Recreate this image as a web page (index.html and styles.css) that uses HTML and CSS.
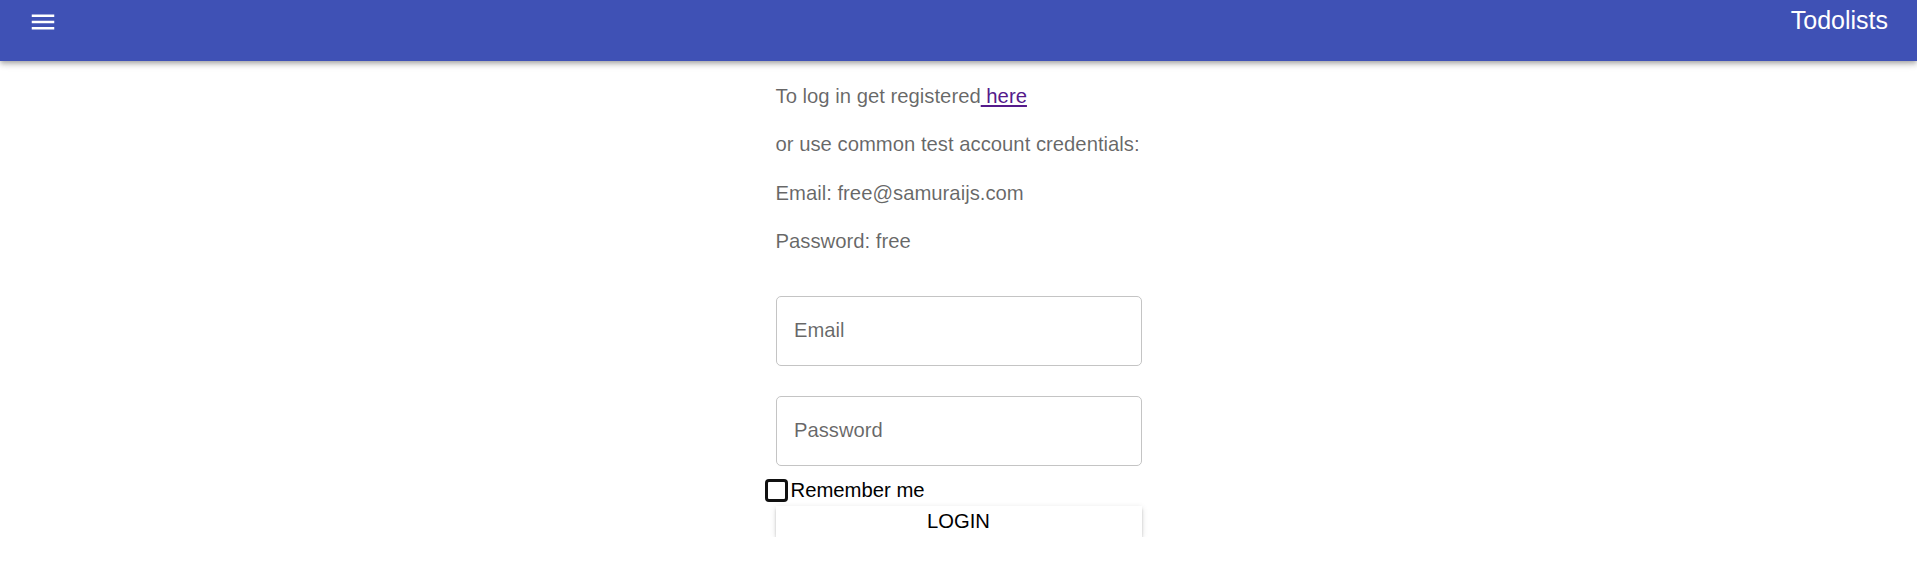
FILE: index.html
```html
<!DOCTYPE html>
<html lang="en">
<head>
<meta charset="utf-8">
<title>Todolists</title>
<link rel="stylesheet" href="styles.css">
</head>
<body>
<header class="app-bar">
  <button class="menu-btn" aria-label="menu">
    <svg class="menu-icon" viewBox="0 0 24 24" width="30" height="30" aria-hidden="true">
      <path fill="#fff" d="M3 18h18v-2H3v2zm0-5h18v-2H3v2zm0-7v2h18V6H3z"/>
    </svg>
  </button>
  <h1 class="app-title">Todolists</h1>
</header>
<main class="page">
  <form class="login">
    <div class="info">
      <p>To log in get registered<a class="reg-link" href="#"> here</a></p>
      <p>or use common test account credentials:</p>
      <p>Email: free@samuraijs.com</p>
      <p>Password: free</p>
    </div>
    <div class="field"><input class="text-input" type="email" placeholder="Email"></div>
    <div class="field"><input class="text-input" type="password" placeholder="Password"></div>
    <label class="remember"><input class="check" type="checkbox"><span>Remember me</span></label>
    <button class="login-btn" type="button">Login</button>
  </form>
</main>
</body>
</html>
```
FILE: styles.css
```css
* { box-sizing: border-box; }
html, body { margin: 0; padding: 0; background: #fff; }
body { font-family: "Liberation Sans", Arial, sans-serif; color: #000; }

.app-bar {
  display: flex;
  justify-content: space-between;
  align-items: flex-start;
  height: 61px;
  padding: 0 29px 0 28px;
  background: #3f51b5;
  color: #fff;
  box-shadow: 0 2px 4px -1px rgba(0,0,0,0.2), 0 4px 5px 0 rgba(0,0,0,0.14), 0 1px 10px 0 rgba(0,0,0,0.12);
  position: relative;
  z-index: 1;
}
.menu-btn {
  margin-top: 6.5px;
  padding: 0;
  border: 0;
  background: none;
  width: 30px;
  height: 30px;
  cursor: pointer;
}
.menu-icon { display: block; }
.app-title {
  margin: 0;
  font-size: 25px;
  font-weight: 400;
  line-height: 40px;
}

.page {
  display: flex;
  justify-content: center;
  padding-top: 1px;
}
.login {
  width: 366px;
  display: flex;
  flex-direction: column;
}
.info p {
  margin: 20px 0;
  font-size: 20.3px;
  line-height: 28.4px;
  color: rgba(0,0,0,0.6);
}
.reg-link { color: #551a8b; text-decoration: underline; }

.field { margin: 20px 0 10px; }
.text-input {
  display: block;
  width: 100%;
  height: 70px;
  padding: 0 17.5px;
  border: 1px solid #c4c4c4;
  border-radius: 5px;
  font-family: inherit;
  font-size: 20.2px;
  color: #000;
  outline: none;
}
.text-input::placeholder { color: rgba(0,0,0,0.6); opacity: 1; }

.remember {
  display: flex;
  align-items: center;
  height: 30px;
  margin-left: -11px;
  font-size: 20.3px;
  line-height: 23px;
  color: #000;
}
.check {
  appearance: none;
  -webkit-appearance: none;
  width: 23px;
  height: 23px;
  margin: 0 3px 0 0;
  border: 3px solid #111;
  border-radius: 4px;
  background: #fff;
}

.login-btn {
  height: 31px;
  padding: 0;
  border: 0;
  border-radius: 0;
  background: #fff;
  font-family: inherit;
  font-size: 20.2px;
  text-transform: uppercase;
  color: #000;
  box-shadow: 0 3.75px 1.25px -2.5px rgba(0,0,0,0.25), 0 2.5px 2.5px 0 rgba(0,0,0,0.18), 0 1.25px 6.25px 0 rgba(0,0,0,0.12);
  cursor: pointer;
}
```
